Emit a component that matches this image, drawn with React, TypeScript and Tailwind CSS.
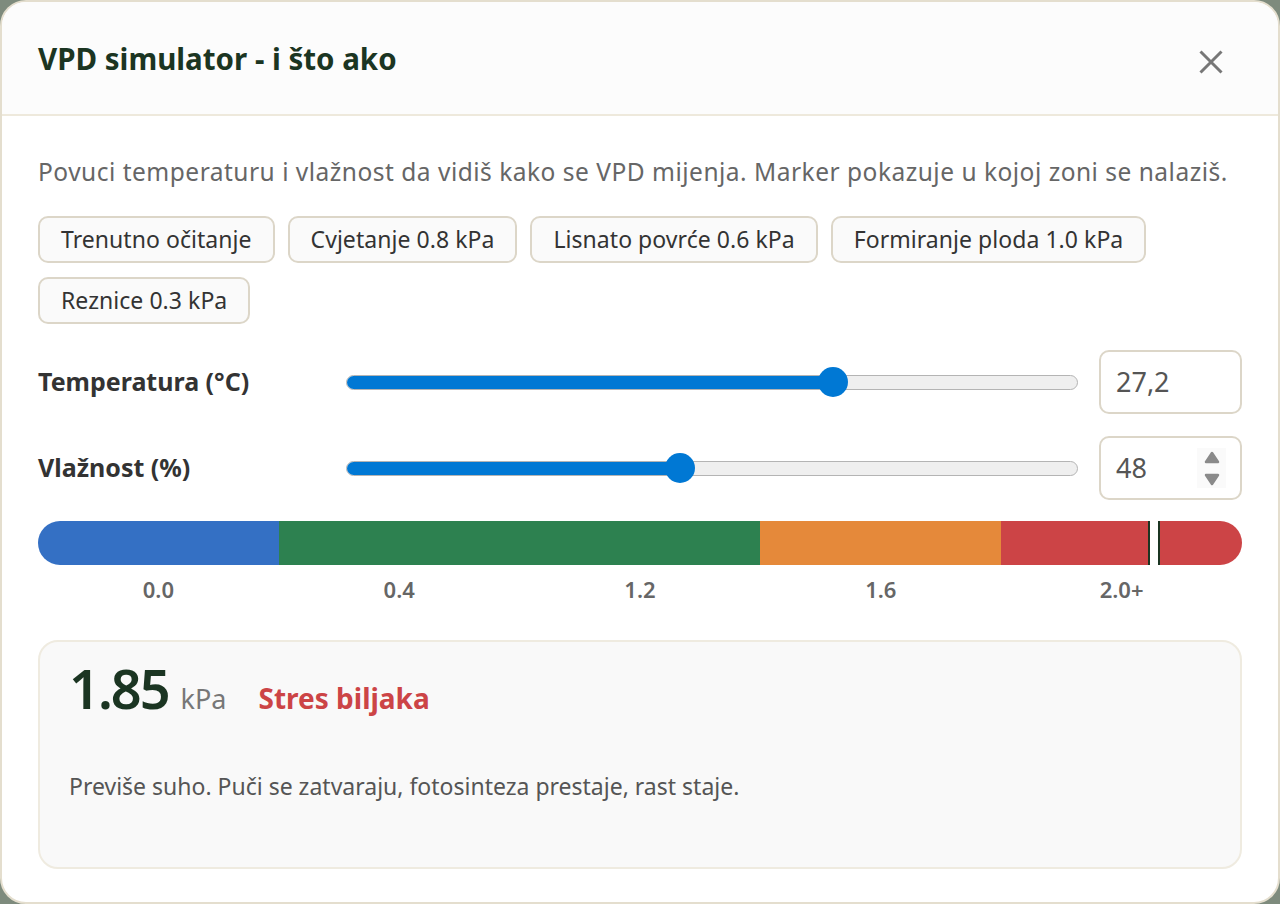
const presets = [
  "Trenutno očitanje",
  "Cvjetanje 0.8 kPa",
  "Lisnato povrće 0.6 kPa",
  "Formiranje ploda 1.0 kPa",
  "Reznice 0.3 kPa",
];

const scale = ["0.0", "0.4", "1.2", "1.6", "2.0+"];

function Slider({ pct }: { pct: number }) {
  return (
    <div className="relative h-[30px] flex-1 flex items-center">
      <div className="h-[15px] w-full rounded-full bg-[#efefef] border border-[#b4b4b4] overflow-hidden">
        <div className="h-full bg-[#0078d4]" style={{ width: `${pct}%` }} />
      </div>
      <div
        className="absolute top-0 h-[30px] w-[30px] -ml-[15px] rounded-full bg-[#0078d4]"
        style={{ left: `${pct}%` }}
      />
    </div>
  );
}

function Row({
  label,
  pct,
  value,
  spinner,
}: {
  label: string;
  pct: number;
  value: string;
  spinner?: boolean;
}) {
  return (
    <div className="flex items-center">
      <div className="w-[308px] text-[25px] font-bold text-[#333]">{label}</div>
      <Slider pct={pct} />
      <div className="ml-[21px] flex h-[64px] w-[143px] items-center justify-between rounded-[10px] border-2 border-[#dcd6c8] bg-white pl-[15px] pr-[14px] text-[27px] text-[#555]">
        <span>{value}</span>
        {spinner && (
          <div className="flex h-[40px] w-[29px] flex-col items-center justify-center gap-[9px] bg-[#fafafa]">
            <svg width="16" height="13" viewBox="0 0 16 13">
              <path d="M2 11 L8 2 L14 11 Z" fill="#8a8a8a" strokeLinejoin="round" stroke="#8a8a8a" strokeWidth="2.5" />
            </svg>
            <svg width="16" height="13" viewBox="0 0 16 13">
              <path d="M2 2 L8 11 L14 2 Z" fill="#8a8a8a" strokeLinejoin="round" stroke="#8a8a8a" strokeWidth="2.5" />
            </svg>
          </div>
        )}
      </div>
    </div>
  );
}

export default function App() {
  return (
    <div
      className="h-[904px] w-[1280px] bg-[#7e8b7d]"
      style={{ fontFamily: '"Noto Sans", "Open Sans", sans-serif' }}
    >
      <div className="flex h-full flex-col overflow-hidden rounded-[26px] border-2 border-[#e4dece] bg-white">
        <div className="flex h-[114px] shrink-0 items-center justify-between border-b-2 border-[#eee9dc] bg-[#fcfcfc] pl-[36px] pr-[55px]">
          <h1 className="mt-[3px] text-[29.5px] font-bold text-[#1b3522]">VPD simulator - i što ako</h1>
          <svg width="24" height="24" viewBox="0 0 24 24" className="mt-[8px]">
            <path d="M1.5 1.5L22.5 22.5M22.5 1.5L1.5 22.5" stroke="#777" strokeWidth="3" />
          </svg>
        </div>

        <div className="flex flex-col px-[36px] pt-[38px]">
          <p className="text-[24.5px] leading-[36px] tracking-[0.5px] text-[#666]">
            Povuci temperaturu i vlažnost da vidiš kako se VPD mijenja. Marker pokazuje u kojoj zoni se nalaziš.
          </p>

          <div className="mt-[26px] flex flex-wrap gap-x-[13px] gap-y-[14px]">
            {presets.map((p) => (
              <button
                key={p}
                className="h-[47px] rounded-[10px] border-2 border-[#dcd6c8] bg-[#fafafa] px-[21px] text-[23px] tracking-[0.05px] text-[#333]"
              >
                {p}
              </button>
            ))}
          </div>

          <div className="mt-[26px] flex flex-col gap-[22px]">
            <Row label="Temperatura (°C)" pct={66.5} value="27,2" />
            <Row label="Vlažnost (%)" pct={45.6} value="48" spinner />
          </div>

          <div className="relative mt-[21px] flex h-[44px] overflow-hidden rounded-full">
            <div className="flex-1 bg-[#3470c4]" />
            <div className="flex-[2] bg-[#2d8150]" />
            <div className="flex-1 bg-[#e5893a]" />
            <div className="flex-1 bg-[#cc4446]" />
            <div className="absolute top-0 left-[1110px] h-full w-[12px] border-x-2 border-[#1b3522] bg-white" />
          </div>

          <div className="mt-[8px] grid grid-cols-5">
            {scale.map((s) => (
              <div key={s} className="text-center text-[22px] leading-[32px] font-semibold text-[#666]">
                {s}
              </div>
            ))}
          </div>

          <div className="mt-[35px] h-[229px] rounded-[20px] border-2 border-[#efebe0] bg-[#f9f9f9] px-[29px] pt-[19px]">
            <div className="flex items-baseline">
              <span className="text-[54px] font-semibold leading-none tracking-[-2px] text-[#1b3522]">1.85</span>
              <span className="ml-[12px] text-[27px] leading-none text-[#777]">kPa</span>
              <span className="ml-[32px] text-[28px] leading-none font-bold text-[#cc4446]">Stres biljaka</span>
            </div>
            <p className="mt-[54px] text-[23px] text-[#555]">
              Previše suho. Puči se zatvaraju, fotosinteza prestaje, rast staje.
            </p>
          </div>
        </div>
      </div>
    </div>
  );
}
